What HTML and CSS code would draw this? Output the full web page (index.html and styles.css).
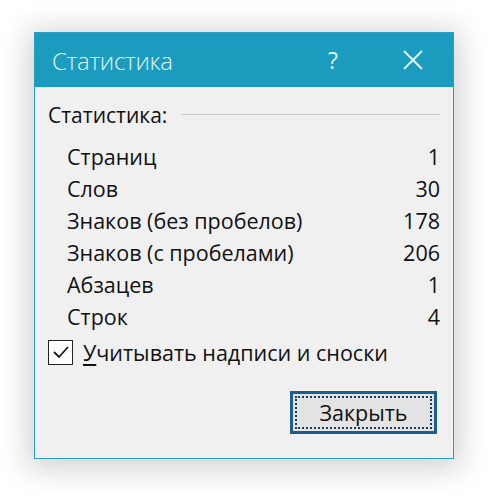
FILE: index.html
```html
<!DOCTYPE html>
<html>
<head>
<meta charset="utf-8">
<link rel="stylesheet" href="styles.css">
</head>
<body>
<div class="dialog">
  <div class="titlebar">
    <span class="title">Статистика</span>
    <span class="help">?</span>
    <span class="close">
      <svg width="22" height="22" viewBox="0 0 22 22"><path d="M2 2 L20 20 M20 2 L2 20" stroke="#dff8fc" stroke-width="2" fill="none"/></svg>
    </span>
  </div>
  <div class="content">
    <div class="group">
      <span class="group-label">Статистика:</span>
      <span class="group-line"></span>
    </div>
    <div class="rows">
      <div class="row"><span>Страниц</span><span>1</span></div>
      <div class="row"><span>Слов</span><span>30</span></div>
      <div class="row"><span>Знаков (без пробелов)</span><span>178</span></div>
      <div class="row"><span>Знаков (с пробелами)</span><span>206</span></div>
      <div class="row"><span>Абзацев</span><span>1</span></div>
      <div class="row"><span>Строк</span><span>4</span></div>
    </div>
    <div class="check">
      <span class="box">
        <svg width="20" height="20" viewBox="0 0 20 20"><path d="M3 10 L8 15 L17 5" stroke="#1a1a1a" stroke-width="1.8" fill="none"/></svg>
      </span>
      <span class="check-label"><u>У</u>читывать надписи и сноски</span>
    </div>
    <div class="actions">
      <button class="btn"><span class="focus">Закрыть</span></button>
    </div>
  </div>
</div>
</body>
</html>
```
FILE: styles.css
```css
html, body {
  margin: 0;
  padding: 0;
  background: #ffffff;
}
body {
  width: 496px;
  height: 504px;
  overflow: hidden;
  font-family: "Open Sans", "Noto Sans", "DejaVu Sans", sans-serif;
}
.dialog {
  margin: 32px 0 0 34px;
  width: 420px;
  height: 427px;
  box-sizing: border-box;
  border: 1px solid #2a9fc0;
  background: #f0f0f0;
  box-shadow: 0 4px 28px 6px rgba(0,0,0,0.18);
  display: flex;
  flex-direction: column;
}
.titlebar {
  height: 54px;
  background: #1b9bbe;
  display: flex;
  align-items: center;
  color: #dff8fc;
}
.title {
  font-size: 24px;
  font-weight: 300;
  margin-left: 17px;
  flex: 1;
  letter-spacing: -0.3px;
}
.help {
  font-size: 23px;
  font-weight: 400;
  width: 20px;
  margin-right: 54px;
}
.close {
  display: flex;
  margin-right: 29px;
}
.content {
  flex: 1;
  padding: 13px 13px 0 13px;
  display: flex;
  flex-direction: column;
  color: #111;
}
.group {
  display: flex;
  align-items: center;
  height: 30px;
}
.group-label {
  font-size: 21px;
}
.group-line {
  flex: 1;
  height: 1px;
  background: #c8c8c8;
  margin-left: 14px;
  margin-top: -2px;
}
.rows {
  margin-top: 10px;
  padding-left: 19px;
  display: flex;
  flex-direction: column;
}
.row {
  display: flex;
  justify-content: space-between;
  height: 32px;
  align-items: center;
  font-size: 21.5px;
}
.check {
  display: flex;
  align-items: center;
  margin-top: 7px;
  height: 26px;
}
.box {
  width: 25px;
  height: 25px;
  box-sizing: border-box;
  border: 1.5px solid #222;
  background: #fff;
  display: flex;
  align-items: center;
  justify-content: center;
}
.check-label {
  font-size: 21.5px;
  margin-left: 10px;
}
.check-label u {
  text-decoration-thickness: 1.5px;
  text-underline-offset: 3px;
}
.actions {
  display: flex;
  justify-content: flex-end;
  margin-top: 26px;
  padding-right: 3px;
}
.btn {
  width: 147px;
  height: 43px;
  box-sizing: border-box;
  border: 3px solid #1c5e8c;
  background: #e3e3e3;
  padding: 2px;
  font-family: inherit;
  display: flex;
}
.focus {
  flex: 1;
  border: 2px dotted #1a3a5a;
  display: flex;
  align-items: center;
  justify-content: center;
  font-size: 21.5px;
  color: #111;
}
```
